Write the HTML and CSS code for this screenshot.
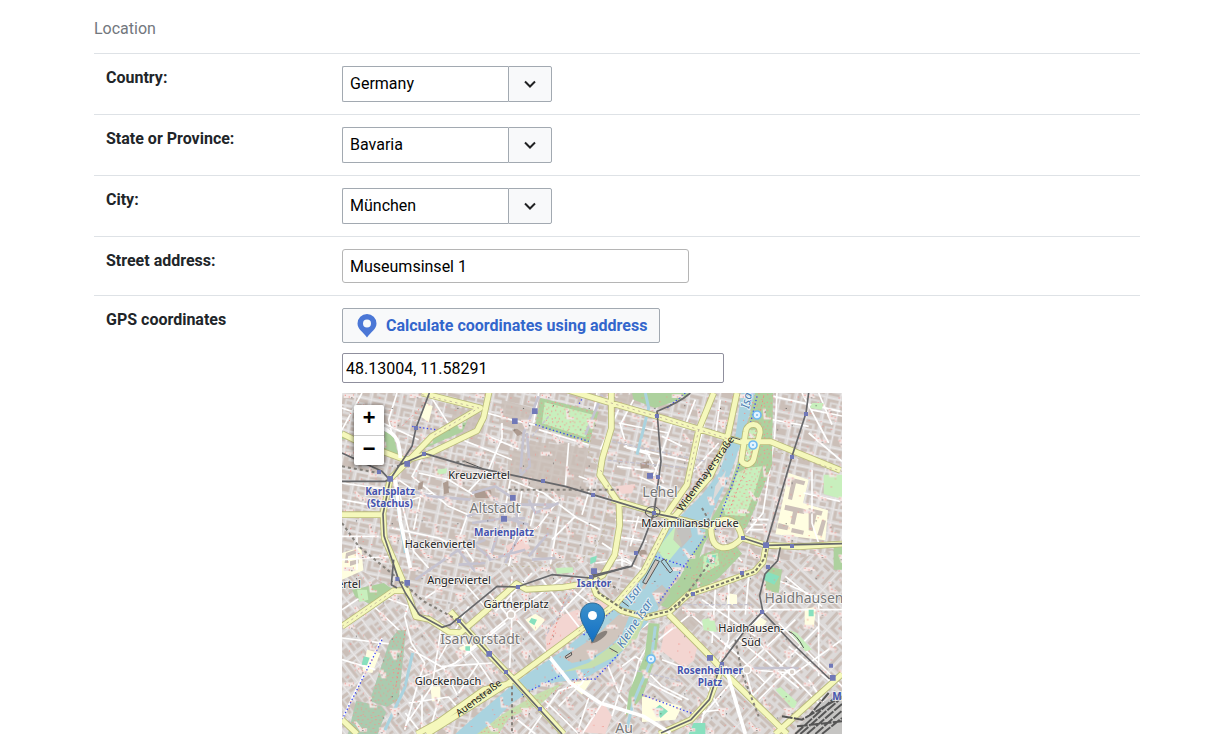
FILE: index.html
```html
<!DOCTYPE html>
<html lang="en">
<head>
<meta charset="utf-8">
<meta name="viewport" content="width=device-width, initial-scale=1">
<title>Location</title>
<link rel="stylesheet" href="styles.css">
</head>
<body>
<main class="page">
<form class="location">
<h2 class="section-title">Location</h2>
<div class="row">
<label class="row-label" for="country">Country:</label>
<div class="combo"><input class="combo-input" id="country" type="text" value="Germany"><button class="combo-button" type="button" aria-label="Show countries"><svg class="chevron" viewBox="0 0 12 12"><path d="M1 3.5l5 5 5-5"/></svg></button></div>
</div>
<div class="row">
<label class="row-label" for="state">State or Province:</label>
<div class="combo"><input class="combo-input" id="state" type="text" value="Bavaria"><button class="combo-button" type="button" aria-label="Show states"><svg class="chevron" viewBox="0 0 12 12"><path d="M1 3.5l5 5 5-5"/></svg></button></div>
</div>
<div class="row">
<label class="row-label" for="city">City:</label>
<div class="combo"><input class="combo-input" id="city" type="text" value="München"><button class="combo-button" type="button" aria-label="Show cities"><svg class="chevron" viewBox="0 0 12 12"><path d="M1 3.5l5 5 5-5"/></svg></button></div>
</div>
<div class="row">
<label class="row-label" for="street">Street address:</label>
<input class="street-input" id="street" type="text" value="Museumsinsel 1">
</div>
<div class="row">
<label class="row-label" for="gps">GPS coordinates</label>
<div class="gps">
<button class="calculate" type="button"><svg class="pin" viewBox="0 0 20 24"><path fill-rule="evenodd" d="M10 0a9.500 9.500 0 0 0-9.500 9.500C.5 15 6 18 10 23.500 14 18 19.500 15 19.500 9.500A9.500 9.500 0 0 0 10 0zm0 5.500a4 4 0 1 1 0 8 4 4 0 0 1 0-8z"/></svg>Calculate coordinates using address</button>
<input class="coordinates" id="gps" type="text" value="48.13004, 11.58291">
<div class="map">
<svg class="map-canvas" viewBox="0 0 500 341" role="img" aria-label="Map of Munich">
<defs>
<pattern id="blocks" width="89" height="73" patternUnits="userSpaceOnUse" patternTransform="rotate(12)">
<rect class="land" width="89" height="73"/>
<path class="house" d="M5 6h34v8H14v18H5zM45 5h37v26h-9V15H45zM5 38h9v22h24v8H5zM20 20h15v9H20zM47 21h18v11H47zM22 39h18v13H22zM46 39h15v10h21v19H46zM68 36h14v7H68z"/>
<path class="lane" d="M0 1h89M42 0v34M0 34h89M1 0v73M43 34v39"/>
</pattern>
<pattern id="blocks-west" width="83" height="71" patternUnits="userSpaceOnUse" patternTransform="rotate(-38)"><rect width="89" height="80" class="land"/><path class="house" d="M5 6h36v9H14v48H5zM48 5h29v24h-8V14H48zM20 21h17v13H20zM20 42h18v22H20zM48 34h10v30H48zM63 38h14v8H63zM63 52h14v12H63z"/><path class="lane" d="M0 1h84M1 0v71M43 0v71"/></pattern>
<pattern id="blocks-east" width="91" height="79" patternUnits="userSpaceOnUse" patternTransform="rotate(43)"><rect width="92" height="80" class="land"/><path class="house" d="M5 6h80v8H14v20H5zM76 20h9v50h-9zM5 42h9v21h22v9H5zM23 21h13v10H23zM45 20h23v9H45zM23 42h20v11H23zM50 39h10v32H50z"/><path class="lane" d="M0 1h91M1 0v79"/></pattern>
<pattern id="lawn-dots" width="53" height="47" patternUnits="userSpaceOnUse"><path class="tree" d="M3 5h4m11 3h3m9-6h4m10 6h4M10 17h3m13-2h3m10 4h4M2 28h4m8 2h4m15-3h3m10 4h4M7 41h4m12-2h4m9 5h3m8-4h4"/></pattern>
<pattern id="street-dots" width="197" height="173" patternUnits="userSpaceOnUse"><path class="tree-pale" d="M5 4h28v6h7v5H5zM80 47h9v26h16v6H83zM142 80h33v8h-11v20h-9zM35 121h9l15 20h16v10H54zM110 139h15v8h7v17h-13z"/><path class="tree" d="M8 7h4m8 5h4m9-6h3M82 50h3m-1 9h4m0 10h5m6 5h4M145 85h4m7 4h5m7-6h4m-16 17h4M38 126h4m6 10h4m8 6h3m6 4h4M112 143h5m6 6h4m2 11h4M57 86h3M24 61h4m136-35h4m-57-11h4M16 161h4m67-52h4m99 27h4m-94-52h3M48 28h3m12 8h3m48 6h3m40 18h3m-98 40h3m120-88h3m-46 40h3m-124 30h3m14 58h3m122-8h3"/><path class="entrance" d="M28 14h3m55 43h3m78 41h3M61 148h3m54 6h3M42 38h3m104 8h3m-29 64h3"/></pattern>
</defs>
<svg viewBox="0 0 1500 1023" width="500" height="341">
<rect width="1500" height="1023" fill="url(#blocks)"/>
<path fill="url(#blocks-west)" d="M0 500L160 590 325 650 490 510 730 500 850 620 500 870 240 1023H0z"/>
<path fill="url(#blocks-east)" d="M1000 650L1270 520 1500 465V1023H430L640 890 830 800z"/>
<g class="built"><path d="M340 40l85 30-20 70-90-20zM480 20l90 25-20 75-80-30zM560 145l180 20-25 150-180-30zM650 160l80 25-35 120-60-10zM820 5h65l-20 55-50-20zM390 280h70v40h-80zM500 170l80 15-20 90-65-10zM1020 640l70 30-40 45-60-40z"/></g>
<g class="pink"><path d="M820 280l60-7-10 28-45 3zM610 720l55-55 43-16 22 24-52 70-65 30zM970 700l40-20 60 65-14 57-30 24-70-55zM755 960l30-30 25 40-20 53-65-5zM490 460l55-30 20 35-55 30zM740 630l40-10 20 15-35 35z"/></g>
<g class="school"><path d="M1340 240l60 20-17 70 75 22-8 90-150-18zM0 480l58-18 6 70-64 28zM250 30l22 10-12 48-25-18zM1255 75h15v50h-15zM550 680l30-18 30 18-30 35zM75 770l40 10-24 60-30-6zM265 880h30v45h-25zM900 910l120 30-20 40-100 7zM1388 648l35-7-8 65h-27zM1155 600l30 5v30h-30zM1250 670l25 15-15 20-24-10zM350 765l35-18 12 22-25 17zM680 870l70-10-30 45z"/></g>
<path class="house" d="M1350 255l40 10-4 12-24-6-12 50-12-3zM1330 335l60 14-4 14-20-4-8 36-13-3 8-36-26-6zM1400 345l42 10-4 13-14-3-12 50-12-3zM1310 390l30 8-4 14-30-6zM1350 405l36 8-3 12-36-7zM12 480l36-12v12l-30 10v20H8zM24 505l26-6v12l-26 8zM1440 380l12 3-12 46-14-3z"/>
<g class="street">
<path d="M0 45l90 30 140 65M165 0l-25 80 25 110M60 0L0 110M260 0l80 125M435 60l80 22 70 15M590 0l-15 90M480 90v45l-40 95-60 65M440 130l90 38M360 140l150 60M245 185l-35 65 110 90 70 30M230 240l90 20 75 45M155 250l65 45 105 25M170 290l45 185 45 50M0 270l140 20M0 320l110 20M0 430h110M45 430v100M0 500l150-10M150 405l140 30 80 40M120 350l150-50M240 290l-25 120M375 370l-25 70 45 65M505 260l-20 110M505 260l100 40 100 75 70 35M590 300l-25 100M650 320l-60 80-75 50M710 250l40 15-30 100M765 0l-15 90M680 150l-10 130M590 110l150 45M540 290l-20 150-20 80M650 370l-25 145M700 370l-70 70"/>
<path d="M830 50l-55 120M875 20l-40 75 20 70 70 20M830 90l150 30M845 160l200 45M910 170l55 100M825 220l110 15M960 130l60 30M990 90l-55 160M1060 20l-35 90M1090 80l-40 160M1135 20l-15 110M1040 250l90-100M1000 300l-110-50M820 380l110 10M820 430l95 15M840 340l-25 130M890 370l-25 90M780 450l90 60M900 530l-60-30-80 10M840 470v50M1305 0l-7 130-35 230-50 60M1295 10l200 45M1400 120l100 85M1290 80l110 20M1405 50l100 20M1410 230v160l20 60M1385 300l110 25M1230 380h50M1225 395h50M1220 410h50M1130 430l70 75M1380 0l80 150M1430 0l40 95"/>
<path d="M210 605l-22 65 20 80 40 60-20 60-40 140M0 650l60-40M85 630l90 85M120 610l80 30M0 735l160 20M0 800l100 30M120 735l-90 180L0 980M200 765l105 60 40 80M250 615l60-40M355 555l90 105M300 690l-30 190-75 110M440 600l60 70M380 640l-90 160M490 690l-150 120-120 50M340 720l70 90 60 90M300 820l150-10M410 810l-60 90M510 665l-7 160M510 550l-4 110M510 665l120 130M510 665L370 780M510 665l150-110M570 540L460 655M600 560l125 160M655 660l80-85M690 590l90 70M200 930l120-18 30 35M190 960l50 63M240 900v120M290 920l-30 103"/>
<path d="M520 975l60 48M560 1023l90-130 70-20M590 905l120 118M650 940l70-70 70-130M800 900l-80 123M740 915l-30 90M790 800l45 110 35 40M920 690L700 860M950 700l-60 105-40 160M950 740l100-80M960 800l110 40 60 100M900 820l60 60 80 40M920 870l100 50M1030 650l150 130M1080 620l160 110M1120 590l-10 160M1160 570v170l-30 70M1220 550l-10 115M1280 550l150 65M1330 550l110 90M1300 630l-140 130M1360 680L1200 830l-120 140M1430 700l-210 220M1240 740l260 260M1310 690l190 190M1190 740l180 145M1210 830l150 10 140-100M1160 840l50 183M1290 650h210M1430 630v220M1340 760l130 110M1210 830l30 110 70 65M1150 750l120 120M1370 800l-120 120M1050 960l90-10M1100 900l-30 123M810 970l40-130M870 960l20-115M840 820l40-30 22 15-10 30M1020 650h270M1400 860l60 90"/>
</g>
<g class="brown"><rect x="398" y="290" width="50" height="25" rx="7"/><path d="M303 270l15-6 3 35-15 5zM230 270l14-6-3 23-14 4zM510 110l15-3 20 14-18 8zM895 210l26-6v20l-25 3z"/><circle cx="903" cy="481" r="11"/></g>
<g class="park"><path d="M595 15L770 57 740 152 580 97zM1236 0H1293L1290 215 1245 330 1215 400 1190 425 1160 372 1115 405 1085 455 1050 560 975 645 940 630 1010 560 1055 470 1110 375 1160 285 1190 200 1225 60zM870 0H1040L1020 17 940 45 875 20zM1080 485L1175 450 1200 482 1130 555 1000 640 975 650 1010 570zM0 115l25 10-10 14H0zM128 112l27 20 15 58-42-10zM245 145l135-72-18 43-110 48zM30 590l95-20 32 22-75 40-42-20zM1475 450h25v80h-25zM920 690l33 2-12 100-40 120-50 60 10-75 47-110zM1280 520l40 10-10 70-45-10z"/></g>
<g class="lawn"><path d="M608 28l145 37-23 68-130-42zM1215 225L1260 220 1240 290 1210 370 1150 365 1140 335 1170 290 1185 240zM1215 110h30l-5 95-40-5zM1085 490l42-10 5 35-50 27zM1300 890l15-8 50 45-10 25zM1340 710l25 10 45 50-20 5zM45 590h30l4 30-27 7zM640 525l52-2 3 15-50 5zM280 230l35-4-2 15-28 4zM1445 245h55v73l-55-15zM1080 680l35-8 10 45-40-5zM1410 30h35l-6 20-35-5z"/></g>
<g class="cemetery"><path d="M168 712h24l-22 208-35 22-52-18 60-180zM42 923l75 17 15 18-25 65H18z"/></g>
<g class="sport"><path d="M935 950l18-15 25 20-22 20zM1055 990h35v33h-50zM1098 488l25-3-6 29-25-6zM65 790l18 4-8 23-16-2zM568 675l17 5-8 17-16-10zM1400 650h15v20h-15zM370 760h14v13h-14zM745 494l20-6-4 18-16 8zM1272 535l40 15-15 25-32-15z"/></g>
<path class="water" d="M1198 0H1240L1222 65 1198 150 1160 255 1110 362 1080 440 1010 540 960 610 915 690 850 765 815 805 740 850 690 862 640 868 580 885 510 930 450 990 430 1023H340L400 970 500 885 560 840 660 775 740 708 800 665 850 615 900 550 950 450 1000 385 1080 305 1130 240 1155 175 1180 130z"/>
<path class="creek" d="M940 700l-12 100-55 130-22 93M212 780l-24 105-65 138M910 0l10 45-35 140M1005 500l-50 120-25 60M160 290l30 190"/>
<path class="island" d="M662 793L757 733 830 665 865 660 840 725 790 770 735 800 690 810zM942 500l8 6-43 83-8-4z"/>
<path class="shore" d="M840 735l70-65-25 65-65 55-70 35-90 12 80-28zM480 965L580 905 665 868 600 930 500 975 470 1023H405z"/>
<path class="lawn" d="M1000 400l20 55-45 55-30-40z"/>
<path class="built" d="M1000 400l45 5 5 25-32 35-24-25zM930 600l30-25 25 25-35 45z"/>
<path class="land" d="M1120 280l32-48-10 45-30 48z"/>
<path class="green-dots" d="M1236 0H1293L1290 215 1215 400 1115 405 1190 200zM595 15L770 57 740 152 580 97zM168 712h24l-22 208-35 22-52-18 60-180zM42 923l75 17 15 18-25 65H18zM470 980L665 868 600 930 470 1023H405zM1080 485l95-35 25 32-178 134z"/>
<path class="pedestrian" d="M590 10l-45 110-10 120M555 120l8 100-30 30M390 300l70-20 45 30M375 370l110-35 150 0M390 390l100-15 70 20M560 320l20 40 70-30M520 350l15 70-45 90M455 310l30 60-40 120M200 290l65 20 120 10M430 440l-80 30-130 90M340 460l60 75M350 515l80-5M490 380l60-5M440 500l110-30M380 440l70 60M1190 825h180M780 5l-50 120M620 420l-60 70M570 500l70-5"/>
<path class="blue-path" d="M580 95l160 50M1245 10l-45 185-80 215M1230 0l-10 45M0 980l120-240M680 860l80-2 70-75M730 0l-20 35M280 110l-70-10M900 905l160 60M1030 0l-55 45M1090 430L950 630M540 905l120-60M820 645l-100 85M940 490l105 35"/>
<path class="red-path" d="M1265 10l-40 180-90 230M190 710l-30 180M590 400l-110 90M250 30l-70 70M695 540l-75 220M820 40l-40 160M740 835l-90 70"/>
<path class="pedestrian dotted" d="M810 145l280 60M780 200l310 30M700 580l-90 150M620 70l-50 60M1020 635h210M870 830l150 35"/>
<rect width="1500" height="1023" fill="url(#street-dots)"/>
<g class="road-case"><path d="M0 122l65 32 125 47 70-18 145-70 20-40 16-75M240 0l175 45-145 85-75 78-50 48-22 105 4 75 67 155 27 80 40 8 60 38 35 2 75-65 92-82 30 17 110-6 75-12 45-25 35-60 15-90-2-65-58-85 8-50 27-90V0M0 365h118M0 700l155-107h35M640-20l150 45 155 45 250 76h90l210 86M1115 0l-45 110-35 165-65 95M1185 0l-30 140-50 110-125 140-75 145-85 100-110 80-210 155-245 153M810 320l170 50 125 33M1200 435l72 22 100 4 128-8M1272 457l-9 50-25 28-110 40-90 30-55 50-70 18-75-20-75-50-20-55M980 664l130 132 45 50 180 177M1300 1023l200-180M1140 820l-38 100-55 60-95 43M325 655l115 127 80 83 145 158M0 980l45 43M510 870l-85 20-140 100-60 33"/><path d="M1107 406c0 75 55 70 93 29-12-63-62-73-93-29zM1198 204c15 20 35 8 38-10l18-75c3-32-40-32-43-2z"/></g>
<g class="road"><path d="M0 122l65 32 125 47 70-18 145-70 20-40 16-75M240 0l175 45-145 85-75 78-50 48-22 105 4 75 67 155 27 80 40 8 60 38 35 2 75-65 92-82 30 17 110-6 75-12 45-25 35-60 15-90-2-65-58-85 8-50 27-90V0M0 365h118M0 700l155-107h35M640-20l150 45 155 45 250 76h90l210 86M1115 0l-45 110-35 165-65 95M1185 0l-30 140-50 110-125 140-75 145-85 100-110 80-210 155-245 153M810 320l170 50 125 33M1200 435l72 22 100 4 128-8M1272 457l-9 50-25 28-110 40-90 30-55 50-70 18-75-20-75-50-20-55M980 664l130 132 45 50 180 177M1300 1023l200-180M1140 820l-38 100-55 60-95 43M325 655l115 127 80 83 145 158M0 980l45 43M510 870l-85 20-140 100-60 33"/><path d="M1107 406c0 75 55 70 93 29-12-63-62-73-93-29zM1198 204c15 20 35 8 38-10l18-75c3-32-40-32-43-2z"/></g>
<path class="road-dots" d="M240 5l170 40-140 85M490 515l30 7 110-6 75-12 45-25 35-60 15-90-2-65-58-85 8-50 27-90M790 25l155 45 220 70M1070 110l-35 165M1300 175l200 60M0 700l155-107M980 390l-75 145-85 100-110 80"/>
<path class="white-road" d="M120 105c50 20 52 45 55 90M625 795l60 75 90 60 130 40 80 50M1150 820l35 120 25 83M160 260l15 125 30 140"/>
<path class="bridge" d="M940 500l12 5-40 68-10-5zM957 505l10-7 25 35-8 7zM670 790l18-12 1 8-17 10zM802 765l25 14M1168 132l27 8M840 625l20 15M370 206l50 20M1340 715q25 10 45 50M910 357a22 16 0 1 0 44 0 22 16 0 1 0-44 0"/>
<path class="rail-tunnel" d="M0 390l50 70 110 90 85 75 100 55M500 290h330M1180 740l20 100 50 130M750 545l80 45M370 205l-35 2M0 220l110 20M1080 345l25 45M1110 500l-110 150M510 880v145"/>
<path class="rail" d="M262 0l-40 105-12 55-65 98-22 105 3 65 43 130M0 180l120 55 20 22M0 265h130l15-7M165 220l85-38 120 35 130 27 170 36 150 45 120 37 60 12 102 30M1203 435l67 22 230-5M1045 0c-35 30-65 40-100 55l12 150-21 155-32 85-35 75-120 28M1400 0l-8 60-42 130-78 267M1315 463l-8 40-38 40-16 65 10 50 90 95 110 105M1262 655l-55 60-70 95-35 110-55 60-90 40M350 682l90 100 220 241M155 500l-7 75 17 10"/>
<path class="rail" d="M169 558L190 600 232 665 300 703 325 695 465 580 525 582 630 545 745 555 860 520"/>
<path class="rail-dash" d="M750 550l20 50 75 50 65 20 70-15 60-50 90-30 110-40 28-40 5-30"/>
<path class="yard" d="M1370 1000l70-70 60-40v133h-130z"/>
<path class="yard-lines" d="M1360 1023l130-120M1375 1023l125-110M1395 1023l105-90M1420 1023l80-70M1440 1023l60-48M1320 970l60 10 120-70M1365 1000l135-15M1460 900l-60 70"/>
<g class="stop"><path d="M136 249h17v17h-17zM187 204h17v17h-17zM510 76h17v17h-17zM570 46h17v17h-17zM504 306h17v17h-17zM477 369h18v17h-18zM187 561h17v17h-17zM433 774h17v17h-17zM747 526h18v17h-18zM915 240h18v17h-18zM1263 448h18v17h-18zM1095 786h18v17h-18zM1464 846h17v17h-17z"/><path d="M216 99h12v12h-12zM240 177h12v12h-12zM105 231h12v12h-12zM597 258h12v12h-12zM747 300h12v12h-12zM939 63h12v12h-12zM942 246h12v12h-12zM930 354h12v12h-12zM1386 57h12v12h-12zM1344 186h12v12h-12zM1197 429h12v12h-12zM1344 453h12v12h-12zM876 474h12v12h-12zM1194 534h12v12h-12zM1047 597h12v12h-12zM1272 516h12v12h-12zM1254 651h12v12h-12zM741 546h12v12h-12zM522 576h12v12h-12zM345 678h12v12h-12zM486 831h12v12h-12zM588 942h12v12h-12zM160 552h12v12h-12zM1134 807h12v12h-12zM1461 812h12v12h-12z"/></g>
<g class="fountain"><circle cx="1245" cy="66" r="12"/><circle cx="1233" cy="156" r="12"/><circle cx="927" cy="798" r="12"/><circle class="fountain-dot" cx="1245" cy="66" r="3"/><circle class="fountain-dot" cx="1233" cy="156" r="3"/><circle class="fountain-dot" cx="927" cy="798" r="3"/></g>
<g class="roundabout"><circle cx="507" cy="665" r="12"/><circle cx="1215" cy="830" r="12"/><circle cx="1350" cy="837" r="9"/></g>
</svg>
<g class="place"><text x="137" y="86">Kreuzviertel</text><text x="98" y="155">Hackenviertel</text><text x="117" y="191">Angerviertel</text><text x="174" y="215">Gärtnerplatz</text><text x="106" y="292">Glockenbach</text><text x="348" y="134">Maximiliansbrücke</text><text x="409" y="239">Haidhausen-</text><text x="409" y="253">Süd</text><text x="7" y="195">ertel</text></g>
<g class="district"><text x="153" y="120">Altstadt</text><text x="318" y="104">Lehel</text><text x="138" y="251">Isarvorstadt</text><text x="462" y="210">Haidhausen</text><text x="282" y="340">Au</text></g>
<g class="station"><text x="48" y="102">Karlsplatz</text><text x="48" y="114">(Stachus)</text><text x="162" y="143">Marienplatz</text><text x="252" y="194">Isartor</text><text x="368" y="281">Rosenheimer</text><text x="368" y="293">Platz</text><text x="495" y="307">M</text></g>
<g class="road-name"><text transform="translate(340 119) rotate(-54)">Widenmayerstraße</text><text transform="translate(117 324) rotate(-37)">Auenstraße</text></g>
<g class="river-name"><text transform="translate(289 211) rotate(-54)">Isar</text><text transform="translate(281 256) rotate(-57)">Kleine Isar</text><text transform="translate(407 16) rotate(-79)">Isar</text></g>
<defs><linearGradient id="marker-fill" x2="0" y2="1"><stop offset="0" stop-color="#3c91ca"/><stop offset="1" stop-color="#126fc6"/></linearGradient></defs>
<ellipse class="marker-shadow" cx="257" cy="244" rx="10" ry="3" transform="rotate(-35 257 244)"/>
<path class="marker" d="M250.500 210c-7 0-12 5.500-12 12 0 3 1 5.500 2 8l10 19 10-19c1-2.500 2-5 2-8 0-6.500-5-12-12-12z"/><circle cx="250.500" cy="222.500" r="4.500" fill="#fff"/>
</svg>
<div class="zoom"><button class="zoom-button" type="button" aria-label="Zoom in">+</button><button class="zoom-button" type="button" aria-label="Zoom out">−</button></div>
</div>
</div>
</div>
</form>
</main>
</body>
</html>
```

FILE: styles.css
```css
* { box-sizing: border-box; }
body { margin: 0; background: #fff; color: #212529; font: 16px/24px Roboto, sans-serif; }
.page { padding: 0 79px 0 94px; }
.location { display: flex; flex-direction: column; }
.section-title { margin: 0; padding: 17px 0 12px; font-size: 16px; font-weight: 400; color: #72777d; }
.row { display: grid; grid-template-columns: 236px minmax(0, 1fr); padding: 12px; border-top: 1px solid #dee2e6; }
.row-label { font-weight: 700; }
input, button { font: inherit; color: #000; margin: 0; }
.combo { display: flex; width: 210px; height: 36px; }
.combo-input { flex: 1; min-width: 0; padding: 0 7px; border: 1px solid #a2a9b1; border-right: 0; border-radius: 2px 0 0 2px; background: #fff; }
.combo-button { display: flex; align-items: center; justify-content: center; width: 44px; padding: 0; border: 1px solid #a2a9b1; border-radius: 0 2px 2px 0; background: #f8f9fa; }
.chevron { width: 12px; height: 12px; fill: none; stroke: #202122; stroke-width: 2; }
.street-input { width: 347px; max-width: 100%; height: 34px; padding: 0 7px; border: 1px solid #b5b5b5; border-radius: 3px; }
.gps { display: flex; flex-direction: column; align-items: flex-start; gap: 10px; }
.calculate { display: flex; align-items: center; gap: 9px; height: 35px; padding: 1px 12px 0 14px; border: 1px solid #a2a9b1; border-radius: 2px; background: #f8f9fa; color: #36c; font-weight: 700; }
.pin { width: 20px; height: 24px; fill: #4b77d6; }
.coordinates { width: 382px; max-width: 100%; height: 30px; padding: 0 3px; border: 1px solid #8f8f9d; border-radius: 2px; }
.map { position: relative; width: 500px; max-width: 100%; overflow: hidden; }
.map-canvas { display: block; width: 100%; height: auto; font-family: "Noto Sans", sans-serif; }
.land { fill: #dddad9; }
.house { fill: #cbbfb8; }
.lane { fill: none; stroke: #ebe8e8; stroke-width: 3; }
.built { fill: #c9beb7; opacity: .8; }
.brown { fill: #ad9b90; }
.pink { fill: #f3d5d1; }
.school { fill: #fffee1; }
.park { fill: #add19e; }
.lawn { fill: #c8efbd; }
.cemetery { fill: #aacbaf; }
.sport { fill: #88e0be; }
.water { fill: #aad3df; }
.creek { fill: none; stroke: #aad3df; stroke-width: 9; }
.island { fill: #d0c5bd; }
.shore { fill: #c6dfae; }
.green-dots { fill: url(#lawn-dots); }
.tree { fill: none; stroke: #f2938c; stroke-width: 3; }
.tree-pale { fill: #f3e8e6; }
.entrance { stroke: #555; stroke-width: 3; }
.street path { fill: none; stroke: #fff; stroke-width: 5; stroke-linejoin: round; }
.pedestrian { fill: none; stroke: #c5c3d0; stroke-width: 8; }
.pedestrian.dotted { stroke-width: 4; stroke-dasharray: 12 5; }
.blue-path { fill: none; stroke: #3c48f1; stroke-width: 4; stroke-dasharray: 4 7; }
.red-path { fill: none; stroke: #f08880; stroke-width: 3; stroke-dasharray: 5 8; }
.road-case { fill: none; stroke: #b9bb7b; stroke-width: 20; stroke-linejoin: round; }
.road { fill: none; stroke: #f5f8bc; stroke-width: 15; stroke-linejoin: round; }
.road-dots { fill: none; stroke: #c5baa0; stroke-width: 3; stroke-dasharray: 7 10; }
.white-road { fill: none; stroke: #fff; stroke-width: 11; }
.bridge { fill: none; stroke: #555; stroke-width: 3; }
.rail-tunnel { fill: none; stroke: #85817b; stroke-width: 6; stroke-dasharray: 9 9; }
.rail { fill: none; stroke: #66676a; stroke-width: 5; stroke-linejoin: round; }
.rail-dash { fill: none; stroke: #777667; stroke-width: 6; stroke-dasharray: 10 6; }
.yard { fill: #c6c5c3; }
.yard-lines { fill: none; stroke: #555; stroke-width: 6; stroke-dasharray: 32 4; }
.stop { fill: #7078b8; }
.fountain { fill: #e2f3ff; stroke: #70baf0; stroke-width: 5; }
.fountain-dot { fill: #70baf0; stroke: none; }
.roundabout { fill: #d9d0c9; stroke: #fff; stroke-width: 5; }
.map-canvas text { paint-order: stroke; stroke: rgba(255, 255, 255, .7); stroke-width: 2px; stroke-linejoin: round; }
.place, .district, .station { text-anchor: middle; }
.place { font-size: 11px; fill: #222; }
.road-name { font-size: 10px; fill: #222; }
.road-name text { stroke: none; }
.district { font-size: 14px; fill: #777; }
.station { font-size: 10px; font-weight: 700; fill: #4654ad; }
.river-name { font-size: 12px; font-style: italic; fill: #4d80b3; }
.marker { fill: url(#marker-fill); stroke: #2e6c97; stroke-width: 1; }
.marker-shadow { fill: #000; opacity: .35; }
.zoom { position: absolute; top: 12px; left: 12px; display: flex; flex-direction: column; width: 30px; border-radius: 2px; background: #fff; box-shadow: 0 1px 5px rgba(0, 0, 0, .65); }
.zoom-button { height: 30px; padding: 0; border: 0; background: none; font: 700 22px/30px "Liberation Mono", monospace; }
.zoom-button + .zoom-button { border-top: 1px solid #ccc; }
```
